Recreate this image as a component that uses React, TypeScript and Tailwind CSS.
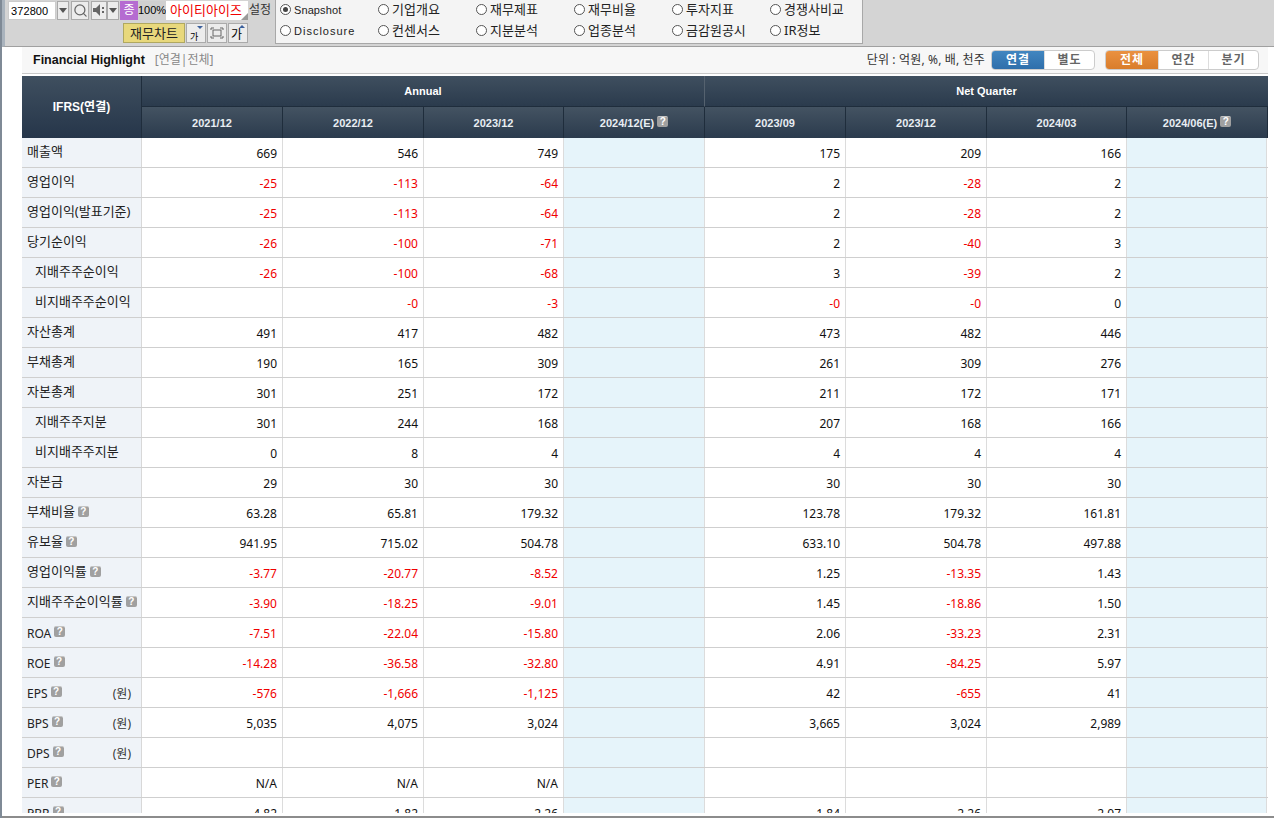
import { Search } from 'lucide-react'

const font = "font-['Noto_Sans','Noto_Sans_CJK_KR',sans-serif]"

type Row = {
  label: string
  unit?: boolean
  help?: boolean
  indent?: boolean
  values: string[]
}

const rows: Row[] = [
  { label: '매출액', values: ['669', '546', '749', '', '175', '209', '166', ''] },
  { label: '영업이익', values: ['-25', '-113', '-64', '', '2', '-28', '2', ''] },
  { label: '영업이익(발표기준)', values: ['-25', '-113', '-64', '', '2', '-28', '2', ''] },
  { label: '당기순이익', values: ['-26', '-100', '-71', '', '2', '-40', '3', ''] },
  { label: '지배주주순이익', indent: true, values: ['-26', '-100', '-68', '', '3', '-39', '2', ''] },
  { label: '비지배주주순이익', indent: true, values: ['', '-0', '-3', '', '-0', '-0', '0', ''] },
  { label: '자산총계', values: ['491', '417', '482', '', '473', '482', '446', ''] },
  { label: '부채총계', values: ['190', '165', '309', '', '261', '309', '276', ''] },
  { label: '자본총계', values: ['301', '251', '172', '', '211', '172', '171', ''] },
  { label: '지배주주지분', indent: true, values: ['301', '244', '168', '', '207', '168', '166', ''] },
  { label: '비지배주주지분', indent: true, values: ['0', '8', '4', '', '4', '4', '4', ''] },
  { label: '자본금', values: ['29', '30', '30', '', '30', '30', '30', ''] },
  { label: '부채비율', help: true, values: ['63.28', '65.81', '179.32', '', '123.78', '179.32', '161.81', ''] },
  { label: '유보율', help: true, values: ['941.95', '715.02', '504.78', '', '633.10', '504.78', '497.88', ''] },
  { label: '영업이익률', help: true, values: ['-3.77', '-20.77', '-8.52', '', '1.25', '-13.35', '1.43', ''] },
  { label: '지배주주순이익률', help: true, values: ['-3.90', '-18.25', '-9.01', '', '1.45', '-18.86', '1.50', ''] },
  { label: 'ROA', help: true, values: ['-7.51', '-22.04', '-15.80', '', '2.06', '-33.23', '2.31', ''] },
  { label: 'ROE', help: true, values: ['-14.28', '-36.58', '-32.80', '', '4.91', '-84.25', '5.97', ''] },
  { label: 'EPS', help: true, unit: true, values: ['-576', '-1,666', '-1,125', '', '42', '-655', '41', ''] },
  { label: 'BPS', help: true, unit: true, values: ['5,035', '4,075', '3,024', '', '3,665', '3,024', '2,989', ''] },
  { label: 'DPS', help: true, unit: true, values: ['', '', '', '', '', '', '', ''] },
  { label: 'PER', help: true, values: ['N/A', 'N/A', 'N/A', '', '', '', '', ''] },
  { label: 'PBR', help: true, values: ['4.82', '1.82', '2.26', '', '1.84', '2.26', '2.07', ''] },
]

const dates = ['2021/12', '2022/12', '2023/12', '2024/12(E)', '2023/09', '2023/12', '2024/03', '2024/06(E)']
const radios = [
  ['Snapshot', '기업개요', '재무제표', '재무비율', '투자지표', '경쟁사비교'],
  ['Disclosure', '컨센서스', '지분분석', '업종분석', '금감원공시', 'IR정보'],
]

function Help({ className = '' }: { className?: string }) {
  return (
    <span className={`inline-flex w-[11px] h-[11px] ml-[3px] items-center justify-center rounded-[2px] bg-[#a0a0a0] border-t border-[#c4c4c4] text-white text-[10px] leading-none font-bold font-['Liberation_Sans',sans-serif] ${className}`}>
      ?
    </span>
  )
}

function Radio({ checked }: { checked?: boolean }) {
  return (
    <span className="w-[11px] h-[11px] rounded-full border border-[#555] bg-white flex items-center justify-center shrink-0">
      {checked && <span className="w-[5px] h-[5px] rounded-full bg-[#444]" />}
    </span>
  )
}

function SmallBtn({ children, className = '' }: { children?: React.ReactNode; className?: string }) {
  return (
    <div className={`h-[19px] bg-[#ececec] border border-[#aaa] flex items-center justify-center text-[#666] ${className}`}>
      {children}
    </div>
  )
}

function Caret() {
  return <span className="w-0 h-0 border-x-[4px] border-x-transparent border-t-[5px] border-t-[#555]" />
}

function Toolbar() {
  return (
    <div className="h-[47px] flex bg-[#d4d4d4] border-b border-[#a0a0a0] border-l-[3px] border-l-[#a9b3bd] text-[12px] pl-[3px] shrink-0">
      <div className="w-[264px] flex flex-col">
        <div className="flex items-center h-[20px]">
          <div className="w-[48px] h-[19px] bg-white border border-[#ccc] pl-[2px] text-[11px] leading-[18px] tracking-[0.1px] text-black font-['Liberation_Sans',sans-serif]">372800</div>
          <SmallBtn className="w-[12px] ml-[1px]"><Caret /></SmallBtn>
          <SmallBtn className="w-[18px] ml-[2px]"><Search size={15} strokeWidth={2} /></SmallBtn>
          <SmallBtn className="w-[16px] ml-[2px]">
            <svg width="13" height="14" viewBox="0 0 13 14" fill="#666">
              <path d="M0 5h3l4-4v12l-4-4H0z" />
              <rect x="9" y="4" width="2" height="2" />
              <rect x="9" y="8" width="2" height="2" />
            </svg>
          </SmallBtn>
          <SmallBtn className="w-[12px]"><Caret /></SmallBtn>
          <div className="w-[18px] h-[19px] ml-[1px] bg-[#b56bd1] text-white text-[12px] leading-[18px] text-center">종</div>
          <div className="w-[28px] h-[19px] bg-[#d0d0d0] text-black text-[11px] leading-[18px] text-center font-['Liberation_Sans',sans-serif]">100%</div>
          <div className="w-[82px] h-[19px] bg-white text-[#f00000] text-[13px] leading-[18px] text-center relative pr-[2px]">
            아이티아이즈
            <span className="absolute right-0 bottom-0 w-0 h-0 border-l-[7px] border-l-transparent border-b-[7px] border-b-[#999]" />
          </div>
          <span className="ml-[1px] text-[#333]">설정</span>
        </div>
        <div className="flex items-center mt-[3px] pl-[115px] gap-[1px]">
          <div className="w-[62px] h-[20px] bg-[#e8d87c] border border-[#b0a860] text-[13px] leading-[18px] text-center text-[#222]">재무차트</div>
          <SmallBtn className="w-[20px] h-[20px] text-black relative">
            <span className="absolute left-[3px] bottom-[-1px] text-[9px] leading-[12px]">가</span>
            <span className="absolute right-[2px] top-[2px] w-0 h-0 border-x-[3px] border-x-transparent border-t-[3px] border-t-[#3b5f9b]" />
          </SmallBtn>
          <SmallBtn className="w-[20px] h-[20px]">
            <svg width="14" height="12" viewBox="0 0 14 12" fill="none" stroke="#666" strokeWidth="1">
              <path d="M1 3V1h3M10 1h3v2M13 9v2h-3M4 11H1V9" />
              <rect x="3" y="3" width="8" height="6" />
            </svg>
          </SmallBtn>
          <SmallBtn className="w-[20px] h-[20px] text-black relative">
            <span className="absolute left-[2px] bottom-[0px] text-[12px] leading-[14px]">가</span>
            <span className="absolute right-[2px] top-[1px] w-0 h-0 border-x-[3px] border-x-transparent border-b-[3px] border-b-[#3b5f9b]" />
          </SmallBtn>
        </div>
      </div>
      <div className="ml-[3px] w-[588px] h-[44px] bg-[#f4f4f4] border border-[#a8a8a8] border-t-0 pl-[4px] flex flex-col justify-between pt-0 pb-[4px]">
        {radios.map((line) => (
          <div key={line[0]} className="grid grid-cols-[repeat(6,98px)] h-[18px]">
            {line.map((text, i) => (
              <label key={text} className="flex items-center gap-[3px] text-[#222]">
                <Radio checked={text === 'Snapshot'} />
                <span className={i === 0 ? `text-[11px] font-['Liberation_Sans',sans-serif] ${text === 'Snapshot' ? 'tracking-[0.1px]' : 'tracking-[1px]'}` : 'text-[13px]'}>{text}</span>
              </label>
            ))}
          </div>
        ))}
      </div>
    </div>
  )
}

function Segment({ items, color }: { items: string[]; color: string }) {
  return (
    <div className="flex h-[20px] border border-[#ccc] rounded-[4px] overflow-hidden bg-white">
      {items.map((item, i) => (
        <div
          key={item}
          className={`flex items-center justify-center text-[12px] font-bold tracking-[1px] ${i > 0 ? 'w-[50px] text-[#666] border-l border-[#ddd]' : `w-[52px] text-white ${color}`}`}
        >
          {item}
        </div>
      ))}
    </div>
  )
}

function TitleBar() {
  return (
    <div className="h-[27px] shrink-0 bg-[#f7f7f7] border-b border-[#c8c8c8] flex items-center justify-between pl-[11px] pr-[9px]">
      <div className="flex items-center">
        <span className="text-[12.5px] font-bold text-[#111] font-['Liberation_Sans',sans-serif]">Financial Highlight</span>
        <span className="ml-[10px] text-[12px] text-[#888]">[연결|전체]</span>
      </div>
      <div className="flex items-center">
        <span className="text-[12px] text-[#333] mr-[6px] tracking-[0.15px]">단위 : 억원, %, 배, 천주</span>
        <Segment items={['연결', '별도']} color="bg-gradient-to-b from-[#4186c0] to-[#2f6fab]" />
        <span className="w-[10px]" />
        <Segment items={['전체', '연간', '분기']} color="bg-gradient-to-b from-[#ea9140] to-[#d97d2b]" />
      </div>
    </div>
  )
}

const gridCols = 'grid grid-cols-[120px_141px_141px_140px_141px_141px_141px_140px_140px]'

function TableHead() {
  return (
    <div className="grid grid-cols-[120px_563px_563px] grid-rows-[31px_31px] text-white text-[11px] font-bold bg-[#2f3f50] font-['Liberation_Sans','Noto_Sans_CJK_KR',sans-serif]">
      <div className="row-span-2 flex items-center justify-center bg-gradient-to-b from-[#3f4f5f] to-[#26364a] border-r border-[#1f2d3c] text-[12px]">IFRS(연결)</div>
      <div className="flex items-center justify-center pt-[1px] bg-gradient-to-b from-[#3f4f5f] to-[#2b3b4d] border-r border-[#55626f] border-b border-b-[#1f2d3c]">Annual</div>
      <div className="flex items-center justify-center pt-[1px] bg-gradient-to-b from-[#3f4f5f] to-[#2b3b4d] border-b border-[#1f2d3c]">Net Quarter</div>
      <div className="col-span-2 grid grid-cols-[141px_141px_140px_141px_141px_141px_140px_141px]">
        {dates.map((d) => (
          <div key={d} className="flex items-center justify-center pt-[1px] bg-gradient-to-b from-[#445362] to-[#2b3b4d] border-r border-[#1f2d3c] text-[#e8edf2]">
            {d}
            {d.endsWith('(E)') && <Help className="ml-[1px] -translate-y-[2px]" />}
          </div>
        ))}
      </div>
    </div>
  )
}

function TableRow({ row }: { row: Row }) {
  const isKorean = /[가-힣]/.test(row.label)
  return (
    <div className={`${gridCols} h-[30px] border-b border-[#cfcfcf] text-[12px]`}>
      <div className={`bg-[#eff3f8] border-r border-[#d8d8d8] flex items-start pr-[10px] text-[#222] ${row.indent ? 'pl-[13px]' : 'pl-[5px]'} ${isKorean ? 'pt-[4px]' : 'pt-[7px]'}`}>
        <span className={`flex items-center whitespace-nowrap ${isKorean ? 'text-[13px]' : 'text-[12px]'}`}>
          {row.label}
          {row.help && <Help className={isKorean ? '' : '-translate-y-[3px]'} />}
        </span>
        {row.unit && <span className="ml-auto text-[#333]">(원)</span>}
      </div>
      {row.values.map((v, i) => (
        <div
          key={i}
          className={`flex items-center justify-end pr-[5px] pt-[2px] border-r border-[#dcdcdc] ${i % 4 === 3 ? 'bg-[#e6f4fa]' : 'bg-white'} ${v.startsWith('-') ? 'text-[#f00000]' : 'text-[#111]'}`}
        >
          {v}
        </div>
      ))}
    </div>
  )
}

export default function App() {
  return (
    <div className={`${font} w-[1274px] h-[818px] overflow-hidden flex flex-col bg-white border-l-[2px] border-[#7f8a96]`}>
      <Toolbar />
      <div className="flex-1 min-h-0 flex flex-col pl-[20px] pr-[6px] bg-white">
        <TitleBar />
        <div className="h-[2px] shrink-0" />
        <div className="h-[737px] overflow-hidden shrink-0">
          <TableHead />
          {rows.map((row) => (
            <TableRow key={row.label} row={row} />
          ))}
        </div>
      </div>
      <div className="h-[2px] bg-[#8c8c8c] shrink-0" />
    </div>
  )
}
